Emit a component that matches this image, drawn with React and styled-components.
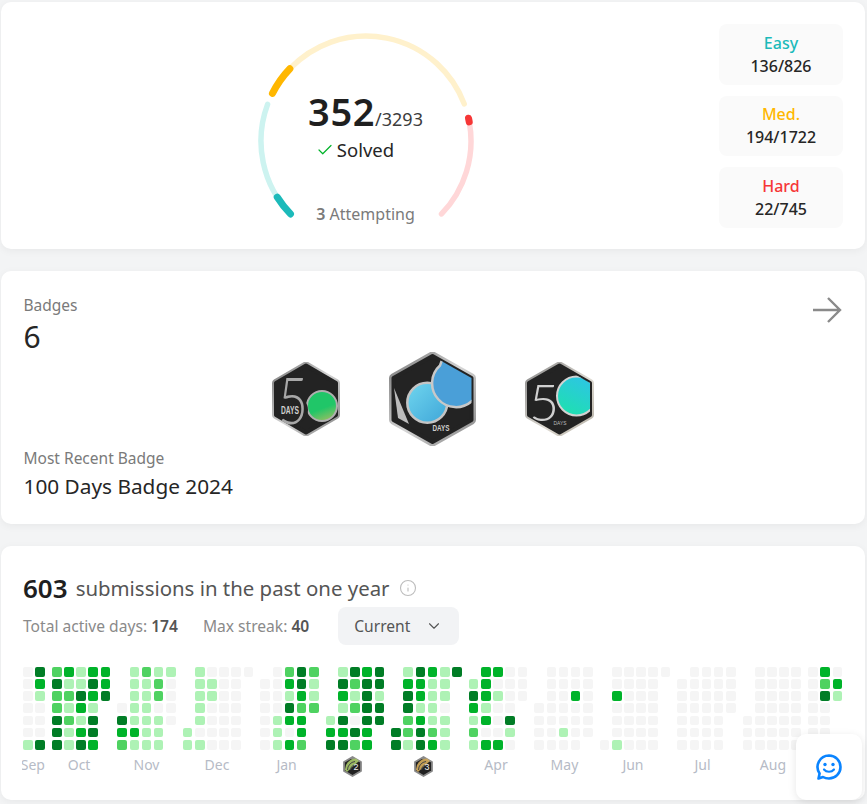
import React from "react";
import styled, { createGlobalStyle } from "styled-components";
import { Check, ChevronDown, Info } from "lucide-react";

const GlobalStyle = createGlobalStyle`
  html, body { margin: 0; padding: 0; background: #f3f4f5; }
  body { font-family: "Noto Sans", "Open Sans", sans-serif; color: #262626; overflow: hidden; }
  * { box-sizing: border-box; }
`;

const Page = styled.div`
  display: flex;
  flex-direction: column;
  gap: 22px;
  padding: 2px 2px 0 1px;
  width: 867px;
  height: 804px;
`;

const Card = styled.section`
  background: #fff;
  border-radius: 10px;
  box-shadow: 0 2px 8px rgba(0, 0, 0, 0.05);
  height: ${(p) => p.$height}px;
  position: relative;
`;

/* top card */
const SolvedCard = styled(Card)`
  display: flex;
  align-items: flex-start;
  padding: 22px 22px 0 22px;
`;

const GaugeSlot = styled.div`
  flex: 1;
  display: flex;
  justify-content: center;
  padding-top: 9px;
  padding-right: 11px;
`;

const Gauge = styled.div`
  position: relative;
  width: 220px;
  height: 200px;
`;

const GaugeText = styled.div`
  position: absolute;
  inset: 0;
  display: flex;
  flex-direction: column;
  align-items: center;
`;

const SolvedCount = styled.div`
  margin-top: 52px;
  display: flex;
  align-items: baseline;
  font-size: 38px;
  line-height: 52px;
  font-weight: 600;
  letter-spacing: 0.6px;
  color: #1f1f1f;
`;

const Total = styled.span`
  font-size: 18px;
  font-weight: 400;
  letter-spacing: 0;
  color: #3c3c3c;
`;

const SolvedLabel = styled.div`
  display: flex;
  align-items: center;
  gap: 3px;
  margin-top: -7px;
  margin-left: -21px;
  font-size: 18.5px;
  line-height: 24px;
  color: #262626;
`;

const Attempting = styled.div`
  margin-top: 41px;
  font-size: 16px;
  line-height: 22px;
  color: #7a7a7a;
  b { font-weight: 600; }
`;

const StatColumn = styled.div`
  width: 124px;
  display: flex;
  flex-direction: column;
  gap: 11px;
`;

const Stat = styled.div`
  height: 60.5px;
  background: #fafafa;
  border-radius: 8px;
  display: flex;
  flex-direction: column;
  align-items: center;
  justify-content: center;
`;

const StatName = styled.div`
  font-size: 16px;
  line-height: 23px;
  font-weight: 500;
  color: ${(p) => p.$color};
`;

const StatValue = styled.div`
  font-size: 16px;
  line-height: 22px;
  font-weight: 500;
  color: #262626;
`;

/* badges card */
const BadgesCard = styled(Card)`
  padding: 22px 22px 0 22.5px;
`;

const BadgesHead = styled.div`
  display: flex;
  justify-content: space-between;
  align-items: flex-start;
  height: 58px;
`;

const MutedLabel = styled.div`
  font-size: 15.5px;
  line-height: 24px;
  color: #7a7a7a;
`;

const BadgeCount = styled.div`
  font-size: 30px;
  line-height: 40px;
  color: #262626;
`;

const ArrowIcon = styled.svg`
  width: 30px;
  height: 28px;
  margin: 3px 1px 0 0;
`;

const BadgeRow = styled.div`
  display: flex;
  justify-content: center;
  align-items: center;
  gap: 49px;
  height: 95px;
`;

const RecentBadge = styled.div`
  margin-top: 1px;
  font-size: 20.8px;
  line-height: 30px;
  color: #262626;
`;

/* submissions card */
const SubmissionCard = styled(Card)`
  padding: 24px 0 0 21px;
  overflow: hidden;
`;

const Heading = styled.div`
  display: flex;
  align-items: center;
  height: 36px;
  padding-left: 1px;
  font-size: 20.4px;
  color: #555;
`;

const HeadingCount = styled.span`
  font-size: 26px;
  font-weight: 600;
  color: #1f1f1f;
  margin-right: 8px;
`;

const InfoIcon = styled(Info)`
  margin-left: 9px;
  color: #bdbdbd;
`;

const MetaRow = styled.div`
  display: flex;
  align-items: center;
  margin-top: 1px;
  padding-left: 1px;
  font-size: 15.6px;
  color: #8a8a8a;
  b { font-weight: 600; color: #555; }
`;

const MetaItem = styled.div`
  margin-right: 25px;
  white-space: nowrap;
`;

const Select = styled.div`
  width: 121px;
  height: 38px;
  margin-left: 4px;
  padding: 0 16px;
  display: flex;
  align-items: center;
  justify-content: space-between;
  background: #f2f3f5;
  border-radius: 8px;
  color: #555;
`;

const HeatScroll = styled.div`
  display: flex;
  gap: 7.25px;
  margin-top: 22px;
  padding-left: 1px;
  overflow: hidden;
`;

const Month = styled.div`
  display: flex;
  flex-direction: column;
  align-items: center;
  flex: none;
`;

const MonthGrid = styled.div`
  display: grid;
  grid-template-columns: repeat(${(p) => p.$cols}, 9.57px);
  grid-auto-rows: 9.57px;
  gap: 2.6px;
`;

const levels = ["#f5f5f5", "#aef2b5", "#4fd261", "#00b32a", "#017d26", "transparent"];

const Cell = styled.div`
  border-radius: 2px;
  background: ${(p) => levels[p.$level]};
`;

const MonthLabel = styled.div`
  height: 32px;
  margin-top: 4px;
  font-size: 14px;
  line-height: 22px;
  color: #b6bbc6;
  white-space: nowrap;
  display: flex;
  justify-content: center;
  width: 0;
  transform: translateX(${(p) => p.$nudge || 0}px);
`;

const MiniBadgeIcon = styled.svg`
  flex: none;
  width: 21px;
  height: 23px;
  margin-top: 1px;
`;

const ChatButton = styled.div`
  position: fixed;
  right: 5px;
  bottom: 4px;
  width: 66px;
  height: 66px;
  background: #fff;
  border-radius: 10px;
  box-shadow: 0 2px 8px rgba(0, 0, 0, 0.1);
  display: flex;
  align-items: center;
  justify-content: center;
`;

const months = [
  { name: "Sep", nudge: -1, rows: ["04", "03", "01", "00", "00", "00", "14"] },
  { name: "Oct", nudge: -2, rows: ["23133", "41143", "22434", "2131.", "4214.", "4134.", "4143."] },
  { name: "Nov", rows: [".1211", ".1120", ".1120", "01100", "41110", "3311.", "2111."] },
  { name: "Dec", nudge: -1, rows: [".10000", ".1100.", ".1100.", ".1000.", ".1000.", "10000.", "11000."] },
  { name: "Jan", nudge: -3, rows: [".0242", "00341", "00131", "00422", "0133.", "0103.", "0132."] },
  { name: "", badge: 2, nudge: -2, rows: [".1434", ".4244", ".3141", ".1244", "14044", "3343.", "4423."] },
  { name: "", badge: 3, nudge: -3, rows: [".14314", ".3311.", ".4311.", ".4110.", ".2311.", "42421.", "41431."] },
  { name: "Apr", nudge: -2, rows: [".3300", "13000", "43100", "3100.", "1304.", "2001.", "1330."] },
  { name: "May", nudge: 1, rows: [".0000", ".0000", ".0030", "00000", "00000", "00100", "0000."] },
  { name: "Jun", nudge: -2, rows: [".00000", ".0000.", ".3000.", ".0000.", ".0000.", ".0000.", "01000."] },
  { name: "Jul", nudge: -4, rows: [".0000", "00000", "00000", "00000", "0000.", "0000.", "0000."] },
  { name: "Aug", nudge: 1, rows: [".0000", ".0000", ".0000", ".0000", "00000", "00000", "00000"] },
  { name: "", rows: ["030", "023", "041", "00.", "00.", "00.", "00."] },
];

const CX = 110;
const CY = 108;
const R = 105;

const arc = (from, to) => {
  const point = (deg) => {
    const a = (deg * Math.PI) / 180;
    return `${CX + R * Math.sin(a)} ${CY - R * Math.cos(a)}`;
  };
  return `M${point(from)}A${R} ${R} 0 ${to - from > 180 ? 1 : 0} 1 ${point(to)}`;
};

const segments = [
  [-134, -69.6, "#cdf3f0", 5.5],
  [-134, -122.3, "#1cbaba", 7],
  [-46.5, 69.3, "#fff1cc", 5.5],
  [-63, -46.5, "#ffb700", 7],
  [80, 134, "#ffd7d8", 5.5],
  [77.5, 79.5, "#f63636", 7],
];

const hex1 = "34,3.5 64,21 64,53 34,70.5 4,53 4,21";
const hex2 = "43.5,4 82.5,26 82.5,68 43.5,90 4.5,68 4.5,26";

const Metal = ({ id }) => (
  <linearGradient id={id} x1="0" y1="0" x2="1" y2="1">
    <stop offset="0" stopColor="#7c7c7c" />
    <stop offset="0.5" stopColor="#d6d6d6" />
    <stop offset="1" stopColor="#8a8a8a" />
  </linearGradient>
);

const HexFrame = ({ points, metal, edge = 8, inner = 4 }) => (
  <>
    <polygon points={points} fill="#232323" stroke={`url(#${metal})`} strokeWidth={edge} strokeLinejoin="round" />
    <polygon points={points} fill="#232323" stroke="#232323" strokeWidth={inner} strokeLinejoin="round" />
  </>
);

const BadgeFiveGreen = () => (
  <svg width="68" height="74" viewBox="0 0 68 74">
    <defs>
      <Metal id="m1" />
      <linearGradient id="g1" x1="0.3" y1="0.2" x2="0.6" y2="1">
        <stop offset="0.5" stopColor="#20c668" />
        <stop offset="1" stopColor="#8fbf62" />
      </linearGradient>
    </defs>
    <HexFrame points={hex1} metal="m1" />
    <circle cx="50" cy="44" r="15" fill="url(#g1)" stroke="#b0b0b0" strokeWidth="2" />
    <circle cx="23" cy="48" r="13" fill="#232323" />
    <text x="6" y="62" textLength="30" lengthAdjust="spacingAndGlyphs" fontFamily="Lato" fontWeight="300" fontSize="66" fill="#a8a8a8">5</text>
    <text x="18" y="52" textAnchor="middle" textLength="18" lengthAdjust="spacingAndGlyphs" fontFamily="Liberation Sans" fontWeight="700" fontSize="10" fill="#cfcfcf">DAYS</text>
  </svg>
);

const BadgeDrops = () => (
  <svg width="87" height="94" viewBox="0 0 87 94">
    <defs>
      <Metal id="m2" />
      <linearGradient id="g2a" x1="0" y1="0" x2="1" y2="1">
        <stop offset="0" stopColor="#70d6ef" />
        <stop offset="1" stopColor="#3fa6d8" />
      </linearGradient>
      <clipPath id="c2"><polygon points={hex2} /></clipPath>
    </defs>
    <HexFrame points={hex2} metal="m2" edge={9} inner={4} />
    <polygon points="5,36 20,72 9,66" fill="#bdbdbd" />
    <circle cx="38.3" cy="50.7" r="20" fill="url(#g2a)" stroke="#c4c4c4" strokeWidth="2.5" />
    <g clipPath="url(#c2)">
      <path d="M83 49A22 22 0 1 1 51 13.5L56 0H92V49z" fill="#4a9fd8" stroke="#c8c8c8" strokeWidth="2.5" />
    </g>
    <text x="52" y="79" textAnchor="middle" textLength="17" lengthAdjust="spacingAndGlyphs" fontFamily="Liberation Sans" fontWeight="700" fontSize="9" fill="#d0d0d0">DAYS</text>
  </svg>
);

const BadgeFiveTeal = () => (
  <svg width="69" height="74" viewBox="0 0 69 74">
    <defs>
      <linearGradient id="m3" x1="0" y1="0" x2="1" y2="1">
        <stop offset="0" stopColor="#8c8c8c" />
        <stop offset="0.6" stopColor="#e0dcd4" />
        <stop offset="1" stopColor="#b5b0a5" />
      </linearGradient>
      <linearGradient id="g3" x1="0.8" y1="0" x2="0.3" y2="1">
        <stop offset="0" stopColor="#2ec4e6" />
        <stop offset="1" stopColor="#1ee0b0" />
      </linearGradient>
      <clipPath id="c3"><polygon points="34.5,3.5 65,21 65,53 34.5,70.5 4,53 4,21" /></clipPath>
    </defs>
    <HexFrame points="34.5,3.5 65,21 65,53 34.5,70.5 4,53 4,21" metal="m3" />
    <text x="4" y="59" fontFamily="Lato" fontWeight="300" fontSize="52" fill="#d0d0d0">5</text>
    <g clipPath="url(#c3)">
      <circle cx="51.5" cy="34" r="19.5" fill="url(#g3)" stroke="#d2d2d2" strokeWidth="2" />
    </g>
    <text x="35" y="63" textAnchor="middle" textLength="13" lengthAdjust="spacingAndGlyphs" fontFamily="Liberation Sans" fontSize="6" fill="#bbb">DAYS</text>
  </svg>
);

const MiniBadge = ({ level }) => {
  const tone = level === 2 ? "#a9c96a" : "#d4ac5c";
  return (
    <MiniBadgeIcon viewBox="0 0 21 23">
      <polygon points="10.5,2 19,7 19,16 10.5,21 2,16 2,7" fill="#222" stroke="#8a8a8a" strokeWidth="1.8" strokeLinejoin="round" />
      <path d="M3 15 A11 11 0 0 1 14 3.5 L17 6 L5 17z" fill={tone} opacity="0.9" />
      <path d="M5.5 15 A8.5 8.5 0 0 1 13 6.5" fill="none" stroke="#444" strokeWidth="1" />
      <path d="M8.5 15 A5.5 5.5 0 0 1 12 10" fill="none" stroke="#444" strokeWidth="1" />
      <text x="14" y="15" textAnchor="middle" fontFamily="Liberation Sans" fontSize="9" fill="#eee">{level}</text>
    </MiniBadgeIcon>
  );
};

export default function App() {
  return (
    <Page>
      <GlobalStyle />
      <SolvedCard $height={247}>
        <GaugeSlot>
          <Gauge>
            <svg width="220" height="200" viewBox="0 0 220 200">
              {segments.map(([from, to, color, width]) => (
                <path key={from + color} d={arc(from, to)} fill="none" stroke={color} strokeWidth={width} strokeLinecap="round" />
              ))}
            </svg>
            <GaugeText>
              <SolvedCount>352<Total>/3293</Total></SolvedCount>
              <SolvedLabel><Check size={18} color="#00b32a" strokeWidth={1.6} />Solved</SolvedLabel>
              <Attempting><b>3</b> Attempting</Attempting>
            </GaugeText>
          </Gauge>
        </GaugeSlot>
        <StatColumn>
          <Stat><StatName $color="#1cbaba">Easy</StatName><StatValue>136/826</StatValue></Stat>
          <Stat><StatName $color="#ffb700">Med.</StatName><StatValue>194/1722</StatValue></Stat>
          <Stat><StatName $color="#f63737">Hard</StatName><StatValue>22/745</StatValue></Stat>
        </StatColumn>
      </SolvedCard>

      <BadgesCard $height={253}>
        <BadgesHead>
          <div>
            <MutedLabel>Badges</MutedLabel>
            <BadgeCount>6</BadgeCount>
          </div>
          <ArrowIcon viewBox="0 0 30 28">
            <path d="M1 14H28M16 2l12 12-12 12" fill="none" stroke="#8a8a8a" strokeWidth="2.4" />
          </ArrowIcon>
        </BadgesHead>
        <BadgeRow>
          <BadgeFiveGreen />
          <BadgeDrops />
          <BadgeFiveTeal />
        </BadgeRow>
        <MutedLabel>Most Recent Badge</MutedLabel>
        <RecentBadge>100 Days Badge 2024</RecentBadge>
      </BadgesCard>

      <SubmissionCard $height={254}>
        <Heading>
          <HeadingCount>603</HeadingCount>
          submissions in the past one year
          <InfoIcon size={18} strokeWidth={1.5} />
        </Heading>
        <MetaRow>
          <MetaItem>Total active days: <b>174</b></MetaItem>
          <MetaItem>Max streak: <b>40</b></MetaItem>
          <Select>Current<ChevronDown size={18} strokeWidth={1.5} /></Select>
        </MetaRow>
        <HeatScroll>
          {months.map((m, i) => (
            <Month key={i}>
              <MonthGrid $cols={m.rows[0].length}>
                {m.rows.join("").split("").map((c, j) => (
                  <Cell key={j} $level={c === "." ? 5 : Number(c)} />
                ))}
              </MonthGrid>
              <MonthLabel $nudge={m.nudge}>
                {m.badge ? <MiniBadge level={m.badge} /> : m.name}
              </MonthLabel>
            </Month>
          ))}
        </HeatScroll>
      </SubmissionCard>

      <ChatButton>
        <svg width="28" height="28" viewBox="0 0 28 28" fill="none">
          <path d="M14 2.5a11.5 11.5 0 0 1 0 23c-2.5 0-4.5-.6-6-1.5L3.5 25.5 4.6 20.5A11.5 11.5 0 0 1 14 2.5z" stroke="#0a84ff" strokeWidth="2.6" strokeLinejoin="round" />
          <circle cx="10" cy="11.5" r="1.7" fill="#0a84ff" />
          <circle cx="18" cy="11.5" r="1.7" fill="#0a84ff" />
          <path d="M9 16.5c2.5 3 7.5 3 10 0" stroke="#0a84ff" strokeWidth="2.2" strokeLinecap="round" />
        </svg>
      </ChatButton>
    </Page>
  );
}
